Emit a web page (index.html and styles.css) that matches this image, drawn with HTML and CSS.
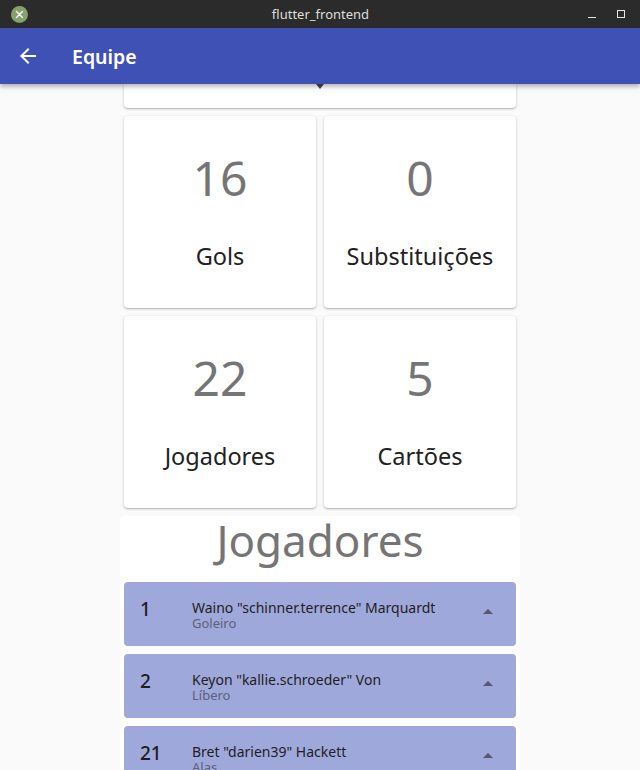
FILE: index.html
```html
<!DOCTYPE html>
<html lang="pt">
<head>
<meta charset="utf-8">
<title>flutter_frontend</title>
<link rel="stylesheet" href="styles.css">
</head>
<body>
<div class="window">
  <div class="titlebar">
    <span class="close-btn">
      <svg width="17" height="17" viewBox="0 0 17 17"><circle cx="8.5" cy="8.5" r="8.5" fill="#87a16b"/><path d="M5.5 5.5l6 6M11.5 5.5l-6 6" stroke="#fff" stroke-width="1.4" stroke-linecap="round"/></svg>
    </span>
    <span class="win-title">flutter_frontend</span>
    <span class="win-controls">
      <span class="min-btn"></span>
      <span class="max-btn"></span>
    </span>
  </div>
  <header class="appbar">
    <svg class="back" width="24" height="24" viewBox="0 0 24 24"><path d="M20 11H7.83l5.59-5.59L12 4l-8 8 8 8 1.41-1.41L7.83 13H20v-2z" fill="#fff"/></svg>
    <h1 class="appbar-title">Equipe</h1>
  </header>
  <main class="content">
    <div class="column">
      <div class="card dropdown-card">
        <svg class="dd-arrow" width="8" height="5" viewBox="0 0 8 5"><path d="M0 0h8L4 5z" fill="#45475a"/></svg>
      </div>
      <div class="stats">
        <div class="card stat"><div class="stat-num">16</div><div class="stat-label">Gols</div></div>
        <div class="card stat"><div class="stat-num">0</div><div class="stat-label">Substituições</div></div>
        <div class="card stat"><div class="stat-num">22</div><div class="stat-label">Jogadores</div></div>
        <div class="card stat"><div class="stat-num">5</div><div class="stat-label">Cartões</div></div>
      </div>
      <section class="players">
        <h2 class="players-title">Jogadores</h2>
        <ul class="player-list">
          <li class="tile">
            <span class="tile-num">1</span>
            <div class="tile-text"><div class="tile-name">Waino "schinner.terrence" Marquardt</div><div class="tile-pos">Goleiro</div></div>
            <svg class="tile-caret" width="24" height="24" viewBox="0 0 24 24"><path d="M7 14l5-5 5 5z" fill="#55596f"/></svg>
          </li>
          <li class="tile">
            <span class="tile-num">2</span>
            <div class="tile-text"><div class="tile-name">Keyon "kallie.schroeder" Von</div><div class="tile-pos">Líbero</div></div>
            <svg class="tile-caret" width="24" height="24" viewBox="0 0 24 24"><path d="M7 14l5-5 5 5z" fill="#55596f"/></svg>
          </li>
          <li class="tile">
            <span class="tile-num">21</span>
            <div class="tile-text"><div class="tile-name">Bret "darien39" Hackett</div><div class="tile-pos">Alas</div></div>
            <svg class="tile-caret" width="24" height="24" viewBox="0 0 24 24"><path d="M7 14l5-5 5 5z" fill="#55596f"/></svg>
          </li>
        </ul>
      </section>
    </div>
  </main>
</div>
</body>
</html>
```
FILE: styles.css
```css
* { box-sizing: border-box; }
html, body { margin: 0; padding: 0; }
body {
  width: 640px;
  height: 770px;
  overflow: hidden;
  font-family: "Noto Sans", "DejaVu Sans", sans-serif;
  background: #fafafa;
}
.window {
  display: flex;
  flex-direction: column;
  height: 770px;
}
.titlebar {
  height: 28px;
  flex: none;
  background: #2b2b2b;
  display: flex;
  align-items: center;
  padding: 0 10px 0 11px;
}
.close-btn { display: flex; width: 80px; }
.win-title {
  flex: 1;
  text-align: center;
  color: #dedede;
  font-size: 13px;
}
.win-controls {
  width: 80px;
  display: flex;
  justify-content: flex-end;
  align-items: center;
  gap: 21px;
  padding-right: 5px;
}
.min-btn {
  width: 8px;
  height: 1px;
  background: #e6e6e6;
  margin-top: 6px;
}
.max-btn {
  width: 8px;
  height: 8px;
  border: 1px solid #e6e6e6;
  margin-top: -1px;
}
.appbar {
  height: 56px;
  flex: none;
  background: #3f51b5;
  display: flex;
  align-items: center;
  padding-left: 16px;
  position: relative;
  z-index: 2;
  box-shadow: 0 2px 4px rgba(0,0,0,0.22), 0 4px 5px rgba(0,0,0,0.1);
}
.back { display: block; }
.appbar-title {
  margin: 0 0 0 32px;
  color: #fff;
  font-size: 19.5px;
  font-weight: 600;
}
.content {
  flex: 1;
  min-height: 0;
  overflow: hidden;
  background: #fafafa;
}
.column {
  width: 400px;
  margin: 0 auto;
  display: flex;
  flex-direction: column;
  min-height: 100%;
}
.card {
  background: #fff;
  border-radius: 4px;
  box-shadow: 0 1px 3px rgba(0,0,0,0.2), 0 1px 1px rgba(0,0,0,0.12);
}
.dropdown-card {
  flex: none;
  height: 24px;
  margin: 0 4px;
  border-radius: 0 0 4px 4px;
  display: flex;
  justify-content: center;
  align-items: flex-start;
}
.dd-arrow { display: block; }
.stats {
  flex: none;
  display: grid;
  grid-template-columns: 192px 192px;
  column-gap: 8px;
  row-gap: 8px;
  padding: 8px 4px 0;
}
.stat {
  height: 192px;
  display: flex;
  flex-direction: column;
  align-items: center;
  padding-top: 38px;
}
.stat-num {
  font-size: 48px;
  line-height: 48px;
  color: #757575;
}
.stat-label {
  margin-top: 42px;
  font-size: 23.5px;
  line-height: 24px;
  color: #212121;
}
.players {
  flex: 1 0 auto;
  margin-top: 8px;
  background: #fff;
  border-radius: 4px 4px 0 0;
  padding-top: 2px;
}
.players-title {
  margin: 0;
  text-align: center;
  font-size: 44px;
  line-height: 44px;
  font-weight: 400;
  color: #757575;
}
.player-list {
  list-style: none;
  margin: 20px 4px 0;
  padding: 0;
  display: flex;
  flex-direction: column;
  gap: 8px;
}
.tile {
  flex: none;
  height: 64px;
  background: #9fa8da;
  border-radius: 4px;
  display: flex;
  align-items: flex-start;
  padding: 18px 16px 0;
}
.tile-num {
  width: 52px;
  flex: none;
  font-size: 19px;
  line-height: 19px;
  font-weight: 500;
  color: #1e1e1e;
}
.tile-text {
  flex: 1;
  display: flex;
  flex-direction: column;
}
.tile-name {
  font-size: 14px;
  line-height: 16px;
  color: #1e1e1e;
}
.tile-pos {
  font-size: 13px;
  line-height: 15px;
  color: #5c6178;
}
.tile-caret { display: block; flex: none; }
```
